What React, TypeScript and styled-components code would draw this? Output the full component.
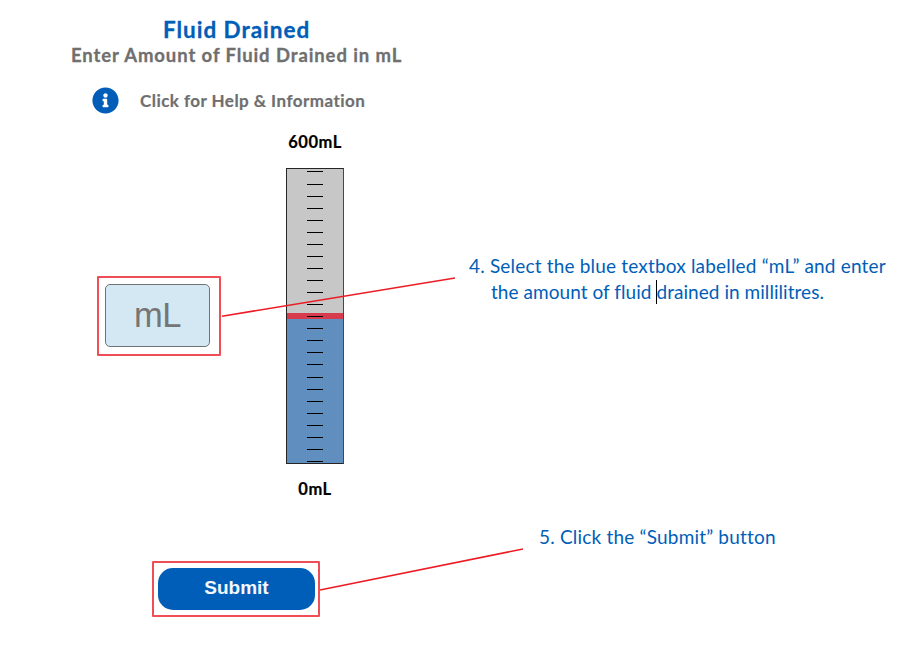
import React from "react";
import styled, { createGlobalStyle } from "styled-components";
import { FaInfoCircle } from "react-icons/fa";

const GlobalStyle = createGlobalStyle`
  * { box-sizing: border-box; }
  body { margin: 0; background: #fff; font-family: Lato, "Liberation Sans", sans-serif; }
`;

const Page = styled.main`
  position: relative;
  display: grid;
  grid-template-columns: 469px 1fr;
  width: 902px;
  height: 645px;
  overflow: hidden;
`;

const Form = styled.section`
  display: flex;
  flex-direction: column;
  padding-top: 17px;
`;

const Title = styled.h1`
  margin: 0 0 0 163px;
  font-size: 22.5px;
  line-height: 26px;
  font-weight: 700;
  letter-spacing: 0.97px;
  -webkit-text-stroke: 0.3px;
  white-space: nowrap;
  color: #005eb8;
`;

const Subtitle = styled.h2`
  margin: 0 0 0 71px;
  font-size: 18.5px;
  line-height: 24px;
  font-weight: 700;
  letter-spacing: 0.9px;
  -webkit-text-stroke: 0.3px;
  white-space: nowrap;
  color: #6f6f6f;
`;

const HelpRow = styled.div`
  display: flex;
  align-items: center;
  gap: 21px;
  height: 27px;
  margin: 20px 0 0 92px;
  color: #005eb8;
`;

const HelpText = styled.span`
  font-size: 17px;
  font-weight: 700;
  letter-spacing: 0.46px;
  -webkit-text-stroke: 0.2px;
  white-space: nowrap;
  color: #6f6f6f;
`;

const Measure = styled.div`
  display: flex;
  height: 368px;
  margin-top: 18px;
  padding-left: 97px;
`;

const Callout = styled.div<{ $w: number; $h: number; $pad: string }>`
  flex: none;
  width: ${(p) => p.$w}px;
  height: ${(p) => p.$h}px;
  padding: ${(p) => p.$pad};
  border: 2px solid #f04e56;
  border-radius: 1px;
`;

const InputSlot = styled.div`
  width: 124px;
  margin-top: 144px;
`;

const AmountInput = styled.input`
  display: block;
  width: 105px;
  height: 63px;
  padding: 0;
  border: 1px solid #6f7378;
  border-radius: 5px;
  background: #d3e8f3;
  text-align: center;
  font: 34.5px "Liberation Sans", Arial, sans-serif;
  letter-spacing: -0.5px;
  outline: none;
  &::placeholder { color: #757575; opacity: 1; }
`;

const Gauge = styled.div`
  display: flex;
  flex-direction: column;
  align-items: center;
  width: 58px;
  margin-left: 65px;
`;

const GaugeLabel = styled.div`
  line-height: 20px;
  padding-bottom: 2px;
  font-size: 16.5px;
  font-weight: 700;
  letter-spacing: 0.5px;
  -webkit-text-stroke: 0.2px;
  white-space: nowrap;
  color: #000;
`;

const Tube = styled.div`
  display: flex;
  flex-direction: column;
  align-items: center;
  width: 58px;
  height: 296px;
  margin: 14px 0 15px;
  padding-top: 2px;
  border: 1px solid #262626;
  border-right-color: #484848;
  background: linear-gradient(#c7c7c7 0 144px, #d63c4e 144px 150px, #5f8ebf 150px);
`;

const Tick = styled.i`
  flex: none;
  width: 16px;
  height: 1px;
  margin-bottom: 11px;
  background: #000;
  &:nth-child(16n + 1) { margin-bottom: 12px; }
`;

const SubmitSlot = styled.div`
  margin: 61px 0 0 152px;
`;

const SubmitButton = styled.button`
  display: block;
  width: 157px;
  height: 42px;
  padding: 0 0 2px;
  border: 0;
  border-radius: 15px;
  background: #005eb8;
  color: #f4f8fc;
  font: bold 19px "Liberation Sans", Arial, sans-serif;
`;

const Notes = styled.aside`
  display: flex;
  flex-direction: column;
  padding-top: 253px;
`;

const Note = styled.p<{ $indent?: number; $top?: number; $spacing: number }>`
  margin: ${(p) => p.$top ?? 0}px 0 0 ${(p) => p.$indent ?? 0}px;
  font-size: 19px;
  line-height: 26px;
  letter-spacing: ${(p) => p.$spacing}px;
  white-space: nowrap;
  color: #005eb8;
`;

const Caret = styled.span`
  display: inline-block;
  width: 1px;
  height: 24px;
  margin-right: -1px;
  vertical-align: -5px;
  background: #000;
`;

const Connectors = styled.svg`
  position: absolute;
  inset: 0;
  pointer-events: none;
`;

export default function App() {
  return (
    <>
      <GlobalStyle />
      <Page>
        <Form>
          <Title>Fluid Drained</Title>
          <Subtitle>Enter Amount of Fluid Drained in mL</Subtitle>
          <HelpRow>
            <FaInfoCircle size={27} />
            <HelpText>Click for Help &amp; Information</HelpText>
          </HelpRow>
          <Measure>
            <InputSlot>
              <Callout $w={124} $h={80} $pad="6px">
                <AmountInput placeholder="mL" aria-label="Amount in mL" />
              </Callout>
            </InputSlot>
            <Gauge>
              <GaugeLabel>600mL</GaugeLabel>
              <Tube>
                {Array.from({ length: 25 }, (_, i) => (
                  <Tick key={i} />
                ))}
              </Tube>
              <GaugeLabel>0mL</GaugeLabel>
            </Gauge>
          </Measure>
          <SubmitSlot>
            <Callout $w={168} $h={56} $pad="5px 4px">
              <SubmitButton type="button">Submit</SubmitButton>
            </Callout>
          </SubmitSlot>
        </Form>
        <Notes>
          <Note $spacing={0.18}>4. Select the blue textbox labelled “mL” and enter</Note>
          <Note $indent={22} $spacing={0.05}>
            the amount of fluid <Caret />drained in millilitres.
          </Note>
          <Note $indent={70} $top={219} $spacing={0.2}>5. Click the “Submit” button</Note>
        </Notes>
        <Connectors width="902" height="645" fill="none" stroke="#ed1c24" strokeWidth="1.5">
          <path d="M222 316.2 455 278" />
          <path d="M320 590 523 549" />
        </Connectors>
      </Page>
    </>
  );
}
